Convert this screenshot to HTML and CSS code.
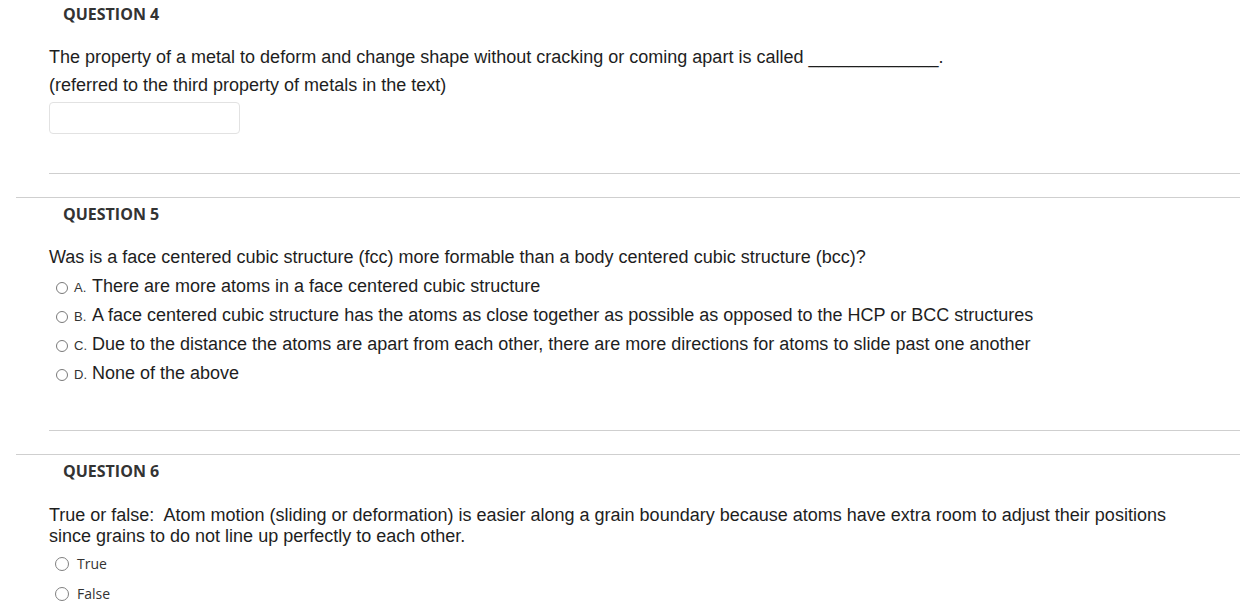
FILE: index.html
```html
<!DOCTYPE html>
<html lang="en">
<head>
<meta charset="utf-8">
<title>Quiz</title>
<link rel="stylesheet" href="styles.css">
</head>
<body>
<div class="quiz">
  <section class="question q-first">
    <h3 class="q-title">QUESTION 4</h3>
    <div class="q-content">
      <p class="q-text">The property of a metal to deform and change shape without cracking or coming apart is called _____________.</p>
      <p class="q-text q-sub">(referred to the third property of metals in the text)</p>
      <input class="q-input" type="text" aria-label="answer">
      <div class="q-divider q-divider-4"></div>
    </div>
  </section>

  <section class="question">
    <h3 class="q-title">QUESTION 5</h3>
    <div class="q-content">
      <p class="q-text">Was is a face centered cubic structure (fcc) more formable than a body centered cubic structure (bcc)?</p>
      <ul class="choices">
        <li class="choice"><span class="radio"></span><span class="letter">A.</span><span class="choice-text">There are more atoms in a face centered cubic structure</span></li>
        <li class="choice"><span class="radio"></span><span class="letter">B.</span><span class="choice-text">A face centered cubic structure has the atoms as close together as possible as opposed to the HCP or BCC structures</span></li>
        <li class="choice"><span class="radio"></span><span class="letter">C.</span><span class="choice-text">Due to the distance the atoms are apart from each other, there are more directions for atoms to slide past one another</span></li>
        <li class="choice"><span class="radio"></span><span class="letter">D.</span><span class="choice-text">None of the above</span></li>
      </ul>
      <div class="q-divider q-divider-5"></div>
    </div>
  </section>

  <section class="question">
    <h3 class="q-title">QUESTION 6</h3>
    <div class="q-content q-content-tf">
      <p class="q-text">True or false:&nbsp; Atom motion (sliding or deformation) is easier along a grain boundary because atoms have extra room to adjust their positions since grains to do not line up perfectly to each other.</p>
      <ul class="tf">
        <li class="tf-choice"><span class="radio radio-lg"></span><span class="tf-text">True</span></li>
        <li class="tf-choice"><span class="radio radio-lg"></span><span class="tf-text">False</span></li>
      </ul>
    </div>
  </section>
</div>
</body>
</html>
```

FILE: styles.css
```css
* { box-sizing: border-box; }

html, body {
  margin: 0;
  padding: 0;
  background: #ffffff;
}

body {
  width: 1240px;
  height: 616px;
  overflow: hidden;
  font-family: "Liberation Sans", Arial, sans-serif;
  color: #1e1e1e;
}

.quiz {
  display: flex;
  flex-direction: column;
}

.question {
  margin-left: 16px;
  border-top: 1px solid #cfcfcf;
  padding-top: 5px;
}

.question.q-first {
  border-top: none;
  padding-top: 3px;
}

.q-title {
  margin: 0;
  padding-left: 47px;
  font-family: "Open Sans", sans-serif;
  font-weight: 700;
  font-size: 16px;
  line-height: 22px;
  color: #333333;
}

.q-content {
  padding-left: 33px;
  padding-right: 50px;
  margin-top: 22px;
}

.q-content-tf {
  margin-top: 23px;
}

.q-text {
  margin: 0;
  font-size: 18px;
  line-height: 21px;
}

.q-sub {
  margin-top: 7px;
}

.q-input {
  display: block;
  margin: 6px 0 0;
  width: 191px;
  height: 32px;
  border: 1px solid #e2e2e2;
  border-radius: 4px;
  background: #ffffff;
  padding: 0;
}

.q-divider {
  height: 1px;
  background: #cfcfcf;
  margin-right: -50px;
  margin-bottom: 23px;
}

.q-divider-4 { margin-top: 39px; }
.q-divider-5 { margin-top: 42px; }

.choices, .tf {
  list-style: none;
  margin: 0;
  padding: 0;
}

.choices { margin-top: 4px; }

.choice {
  display: flex;
  align-items: center;
  height: 29px;
  font-size: 18px;
}

.radio {
  flex: none;
  width: 12px;
  height: 12px;
  border: 1px solid #7a7a7a;
  border-radius: 50%;
  background: #ffffff;
  margin-left: 7px;
  margin-top: 2px;
}

.letter {
  flex: none;
  width: 18px;
  margin-left: 6px;
  font-size: 13px;
  color: #333333;
  margin-top: 2px;
}

.choice-text {
  line-height: 21px;
}

.tf { margin-top: 1px; }

.tf-choice {
  display: flex;
  align-items: center;
  height: 30px;
  font-family: "Open Sans", sans-serif;
  font-size: 14px;
  color: #333333;
}

.radio-lg {
  width: 14px;
  height: 14px;
  margin-left: 6px;
  margin-top: 1px;
  border-color: #7f7f7f;
}

.tf-text {
  margin-left: 8px;
}
```
